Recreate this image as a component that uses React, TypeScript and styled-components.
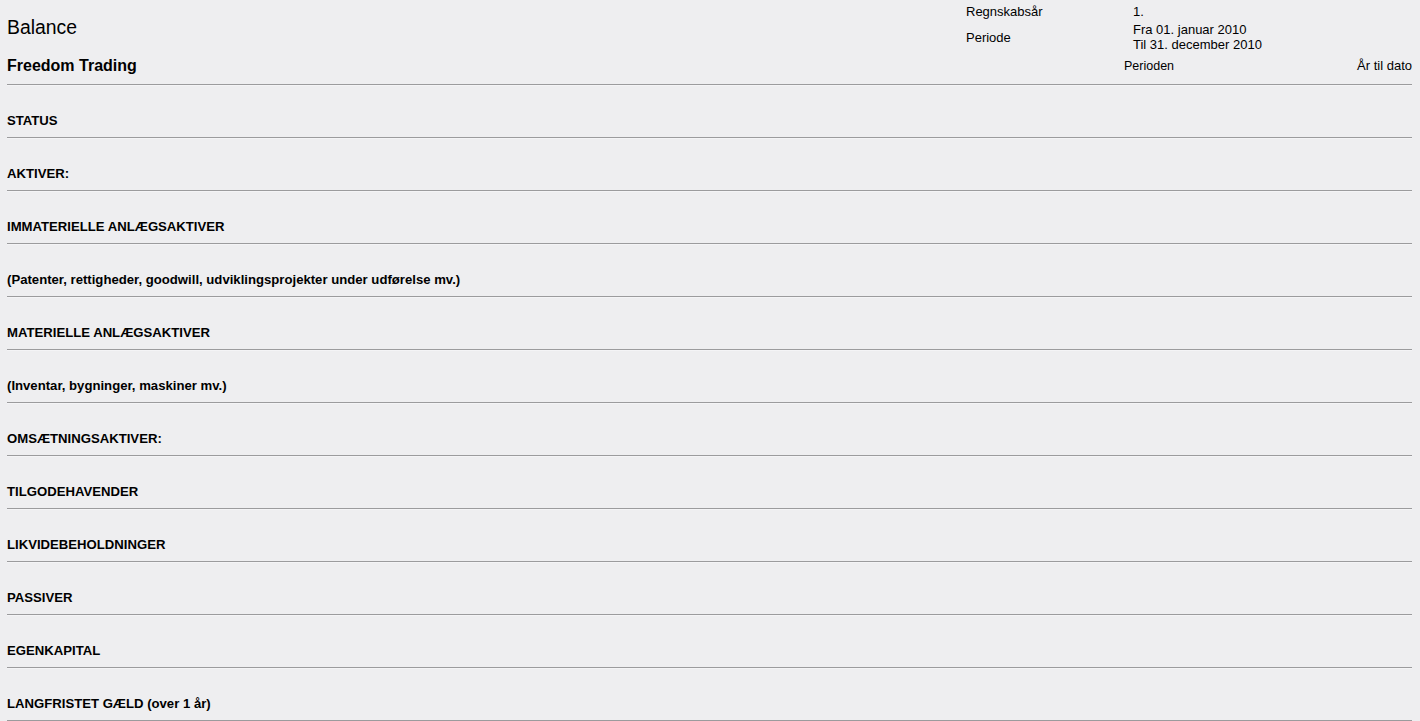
import { createGlobalStyle, styled } from 'styled-components';

const GlobalStyle = createGlobalStyle`
  html, body {
    margin: 0;
    padding: 0;
    background: #eeeef0;
  }
  body {
    font-family: 'Liberation Sans', Arial, Helvetica, sans-serif;
    color: #000;
  }
`;

const StyledReport = styled.main`
  padding: 4px 8px 0 7px;
`;

const StyledHeader = styled.header`
  display: grid;
  grid-template-columns: 959px 167px 1fr;
  grid-template-rows: 15px 30px;
  row-gap: 3px;
  font-size: 13px;
  line-height: 15px;

  .title {
    grid-row: 1 / span 2;
    align-self: center;
    font-size: 19.4px;
    line-height: 22px;
    margin-top: -2px;
  }

  .label {
    align-self: center;
  }
`;

const StyledFirmRow = styled.div`
  display: grid;
  grid-template-columns: 1117px 1fr auto;
  align-items: center;
  margin: 4px 0 9px;
  height: 19px;
  font-size: 13px;

  .firm {
    font-size: 16px;
    font-weight: bold;
  }

  .period {
    font-size: 12.5px;
  }
`;

const Rule = styled.hr`
  margin: 0;
  height: 0;
  border: none;
  border-top: 1px solid #9b9b9d;
  border-bottom: 1px solid #f4f4f6;
`;

const SectionRow = styled.div`
  padding: 27px 0 8px;
  font-size: 13.15px;
  line-height: 16px;
  font-weight: bold;
`;

const sections = [
  'STATUS',
  'AKTIVER:',
  'IMMATERIELLE ANLÆGSAKTIVER',
  '(Patenter, rettigheder, goodwill, udviklingsprojekter under udførelse mv.)',
  'MATERIELLE ANLÆGSAKTIVER',
  '(Inventar, bygninger, maskiner mv.)',
  'OMSÆTNINGSAKTIVER:',
  'TILGODEHAVENDER',
  'LIKVIDEBEHOLDNINGER',
  'PASSIVER',
  'EGENKAPITAL',
  'LANGFRISTET GÆLD (over 1 år)',
];

export default function App() {
  return (
    <>
      <GlobalStyle />
      <StyledReport>
        <StyledHeader>
          <div className={'title'}>Balance</div>
          <div className={'label'}>Regnskabsår</div>
          <div>1.</div>
          <div className={'label'}>Periode</div>
          <div>
            Fra 01. januar 2010
            <br />
            Til 31. december 2010
          </div>
        </StyledHeader>

        <StyledFirmRow>
          <div className={'firm'}>Freedom Trading</div>
          <div className={'period'}>Perioden</div>
          <div>År til dato</div>
        </StyledFirmRow>
        <Rule />

        {sections.map((name) => (
          <div key={name}>
            <SectionRow>{name}</SectionRow>
            <Rule />
          </div>
        ))}
      </StyledReport>
    </>
  );
}
